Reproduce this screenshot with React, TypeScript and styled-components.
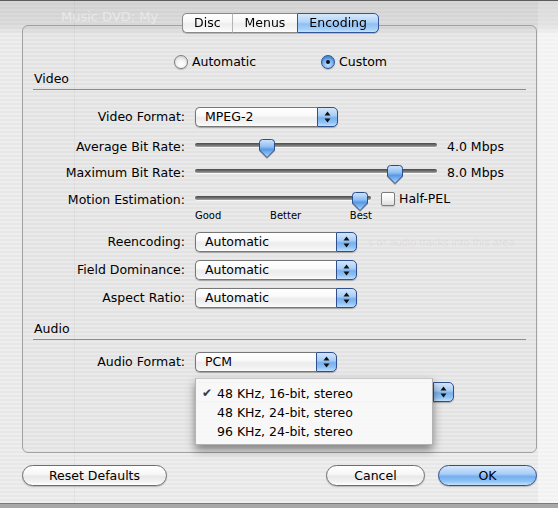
import React from "react";
import styled, { createGlobalStyle } from "styled-components";

const GlobalStyle = createGlobalStyle`
  html, body { margin: 0; padding: 0; }
  body {
    font-family: "DejaVu Sans", "Liberation Sans", sans-serif;
    font-size: 12.5px;
    color: #000;
  }
`;

const stripes =
  "repeating-linear-gradient(to bottom, #eeeeee 0px, #eeeeee 2px, #e7e7e7 2px, #e7e7e7 4px)";

const Sheet = styled.div`
  width: 558px;
  height: 508px;
  box-sizing: border-box;
  border-top: 1px solid #5c5c5c;
  display: flex;
  flex-direction: column;
  overflow: hidden;
  background:
    linear-gradient(to bottom, rgba(0, 0, 0, 0.1) 0px, rgba(0, 0, 0, 0.07) 24px, rgba(0, 0, 0, 0) 34px),
    linear-gradient(to right, rgba(0, 0, 0, 0) 538px, rgba(255, 255, 255, 0.45) 538px),
    linear-gradient(to right, rgba(0, 0, 0, 0) 74px, rgba(0, 0, 0, 0.04) 74px, rgba(0, 0, 0, 0.04) 75px, rgba(0, 0, 0, 0) 75px),
    ${stripes};
`;

const Main = styled.div`
  display: flex;
  flex-direction: column;
  padding: 0 21px 0 22px;
`;

const GhostTitle = styled.div`
  height: 16px;
  padding: 8px 0 0 61px;
  line-height: 16px;
  font-size: 13px;
  color: rgba(255, 255, 255, 0.45);
  white-space: nowrap;
`;

const GroupBox = styled.div`
  height: 428px;
  box-sizing: border-box;
  border: 1px solid #a2a2a2;
  border-radius: 6px;
  background: linear-gradient(to bottom, rgba(0, 0, 0, 0.035) 0px, rgba(0, 0, 0, 0.02) 10px, rgba(0, 0, 0, 0.02) 100%);
  padding: 0 10px;
  display: flex;
  flex-direction: column;
`;

const TabBar = styled.div`
  align-self: center;
  margin-top: -13px;
  margin-left: 2px;
  display: flex;
  height: 20px;
  filter: drop-shadow(0 1px 0.5px rgba(0, 0, 0, 0.2));
`;

const Tab = styled.div<{ $active?: boolean; $first?: boolean; $last?: boolean }>`
  box-sizing: border-box;
  height: 20px;
  padding: 0 11.5px;
  line-height: 18px;
  border-top: 1px solid ${(p) => (p.$active ? "#34559a" : "#8a8a8a")};
  border-bottom: 1px solid ${(p) => (p.$active ? "#34559a" : "#8a8a8a")};
  border-left: 1px solid ${(p) => (p.$active ? "#34559a" : p.$first ? "#8a8a8a" : "#b4b4b4")};
  border-right: ${(p) => (p.$last || p.$active ? `1px solid ${p.$active ? "#34559a" : "#8a8a8a"}` : "none")};
  border-radius: ${(p) => (p.$first ? "5px 0 0 5px" : p.$last ? "0 5px 5px 0" : "0")};
  background: ${(p) =>
    p.$active
      ? "linear-gradient(to bottom, #d6e9fc 0%, #b0d3f7 45%, #8fc0f3 55%, #a6d0f7 85%, #c6e3fd 100%)"
      : "linear-gradient(to bottom, #ffffff 0%, #f7f7f7 45%, #ededed 55%, #f6f6f6 85%, #ffffff 100%)"};
  white-space: nowrap;
`;

const RadioRow = styled.div`
  margin-top: 21px;
  height: 16px;
  display: flex;
  justify-content: center;
  gap: 65px;
  padding-left: 2px;
`;

const RadioItem = styled.div`
  display: flex;
  align-items: center;
  gap: 4px;
  line-height: 16px;
`;

const RadioDot = styled.span<{ $on?: boolean }>`
  width: 14px;
  height: 14px;
  box-sizing: border-box;
  border-radius: 50%;
  border: 1px solid ${(p) => (p.$on ? "#2f5193" : "#7f7f7f")};
  background: ${(p) =>
    p.$on
      ? "radial-gradient(circle at 50% 75%, #c4e2fd 0%, #7fb5f0 45%, #4d8fe0 70%, #3f7bcf 100%)"
      : "radial-gradient(circle at 50% 70%, #ffffff 0%, #f2f2f2 45%, #d6d6d6 80%, #c0c0c0 100%)"};
  box-shadow: 0 1px 1px rgba(0, 0, 0, 0.2);
  display: flex;
  align-items: center;
  justify-content: center;
  &::after {
    content: "";
    display: ${(p) => (p.$on ? "block" : "none")};
    width: 4px;
    height: 4px;
    border-radius: 50%;
    background: #111;
  }
`;

const SectionTitle = styled.div<{ $mt: number }>`
  margin-top: ${(p) => p.$mt}px;
  line-height: 16px;
  padding: 1px 0 2px 1px;
  border-bottom: 1px solid #8c8c8c;
`;

const FieldRow = styled.div<{ $mt: number; $top?: boolean }>`
  margin-top: ${(p) => p.$mt}px;
  display: flex;
  align-items: ${(p) => (p.$top ? "flex-start" : "center")};
  min-height: ${(p) => (p.$top ? 19 : 20)}px;
  white-space: nowrap;
`;

const FieldLabel = styled.div<{ $dy?: number }>`
  width: 152px;
  flex-shrink: 0;
  margin-right: 10px;
  margin-top: ${(p) => p.$dy ?? 0}px;
  text-align: right;
  line-height: 16px;
`;

const Indent = styled.div`
  width: 162px;
  flex-shrink: 0;
`;

const PopupBox = styled.div<{ $w: number }>`
  position: relative;
  width: ${(p) => p.$w}px;
  height: 20px;
  display: flex;
  flex-shrink: 0;
  border-radius: 5px;
  box-shadow: 0 1px 1px rgba(0, 0, 0, 0.28);
`;

const PopupBody = styled.div`
  flex: 1;
  box-sizing: border-box;
  height: 20px;
  border: 1px solid #777;
  border-right: none;
  border-radius: 5px 0 0 5px;
  padding-left: 9px;
  line-height: 18px;
  overflow: hidden;
  background: linear-gradient(to bottom, #ffffff 0%, #fafafa 40%, #ececec 55%, #f3f3f3 85%, #fdfdfd 100%);
`;

const PopupArrows = styled.div`
  width: 21px;
  box-sizing: border-box;
  height: 20px;
  border: 1px solid #2f4f8f;
  border-radius: 0 5px 5px 0;
  background: linear-gradient(to bottom, #d2e6fb 0%, #a9cdf5 42%, #78b0ee 55%, #8fc3f5 80%, #c1e0fd 100%);
  display: flex;
  align-items: center;
  justify-content: center;
`;

const SliderBox = styled.div<{ $w: number }>`
  position: relative;
  width: ${(p) => p.$w}px;
  height: 19px;
  flex-shrink: 0;
`;

const Track = styled.div`
  margin-top: 5px;
  height: 4px;
  border-radius: 2px;
  background: linear-gradient(to bottom, #4a4a4a 0%, #6e6e6e 50%, #a5a5a5 100%);
  box-shadow: 0 1px 0 rgba(255, 255, 255, 0.7);
`;

const Thumb = styled.div`
  position: absolute;
  top: 0;
  width: 18px;
  height: 21px;
  filter: drop-shadow(0 1px 0.6px rgba(0, 0, 0, 0.3));
`;

const Value = styled.div`
  margin-left: 10px;
  margin-top: 1px;
  line-height: 16px;
`;

const CheckBox = styled.span`
  margin: 1px 0 0 10px;
  width: 14px;
  height: 14px;
  box-sizing: border-box;
  border: 1px solid #7c7c7c;
  border-radius: 2px;
  background: linear-gradient(to bottom, #ffffff 0%, #f4f4f4 50%, #dedede 100%);
  box-shadow: 0 1px 1px rgba(0, 0, 0, 0.15);
  flex-shrink: 0;
`;

const CheckLabel = styled.div`
  margin-left: 4px;
  line-height: 16px;
`;

const TickRow = styled.div`
  margin-left: 162px;
  width: 177px;
  display: flex;
  justify-content: space-between;
  font-size: 10px;
  line-height: 12px;
`;

const Ghost = styled.div`
  margin-left: 11px;
  font-family: "Liberation Sans", sans-serif;
  font-size: 11px;
  color: rgba(0, 0, 0, 0.06);
`;

const Menu = styled.div`
  position: absolute;
  left: 0;
  top: -4px;
  width: 238px;
  box-sizing: border-box;
  padding: 5px 0 3px;
  background: rgba(248, 248, 248, 0.97);
  border: 1px solid #b3b3b3;
  border-top-color: #c8c8c8;
  box-shadow: 0 5px 9px rgba(0, 0, 0, 0.45);
  z-index: 5;
`;

const MenuItem = styled.div`
  position: relative;
  height: 19px;
  line-height: 19px;
  padding-left: 21px;
  white-space: nowrap;
`;

const Check = styled.span`
  position: absolute;
  left: 6px;
  top: 0;
  font-size: 12px;
  color: #3a3a3a;
`;

const ButtonRow = styled.div`
  margin-top: 12px;
  display: flex;
  justify-content: space-between;
`;

const ButtonGroup = styled.div`
  display: flex;
  gap: 13px;
`;

const Button = styled.div<{ $w: number; $primary?: boolean }>`
  width: ${(p) => p.$w}px;
  height: 21px;
  box-sizing: border-box;
  border-radius: 11px;
  border: 1px solid ${(p) => (p.$primary ? "#2f4f8f" : "#6e6e6e")};
  line-height: 19px;
  text-align: center;
  box-shadow: 0 1px 1px rgba(0, 0, 0, 0.22);
  background: ${(p) =>
    p.$primary
      ? "linear-gradient(to bottom, #d4e8fc 0%, #a8cdf6 42%, #76aeee 55%, #8cc2f5 80%, #c3e1fd 100%)"
      : "linear-gradient(to bottom, #ffffff 0%, #f7f7f7 42%, #e8e8e8 55%, #f2f2f2 82%, #ffffff 100%)"};
`;

const Footer = styled.div`
  margin-top: auto;
  height: 4px;
  border-top: 1px solid #7a7a7a;
  background: #a8a8a8;
`;

const Arrows = () => (
  <svg width="7" height="12" viewBox="0 0 7 12">
    <polygon points="3.5,0.5 6.5,4.5 0.5,4.5" fill="#111" />
    <polygon points="0.5,7.5 6.5,7.5 3.5,11.5" fill="#111" />
  </svg>
);

const ThumbIcon = () => (
  <svg width="18" height="21" viewBox="0 0 18 21">
    <defs>
      <linearGradient id="thumbGrad" x1="0" y1="0" x2="0" y2="1">
        <stop offset="0" stopColor="#cfe4fb" />
        <stop offset="0.4" stopColor="#8fbff3" />
        <stop offset="0.55" stopColor="#5a98e6" />
        <stop offset="0.8" stopColor="#86bcf3" />
        <stop offset="1" stopColor="#b9dcfc" />
      </linearGradient>
    </defs>
    <path
      d="M1.5 4.5 Q1.5 1.5 4.5 1.5 H13.5 Q16.5 1.5 16.5 4.5 V12 L9 19.5 L1.5 12 Z"
      fill="url(#thumbGrad)"
      stroke="#2b4c8c"
      strokeWidth="1"
    />
  </svg>
);

const Popup = ({ w, text, children }: { w: number; text?: string; children?: React.ReactNode }) => (
  <PopupBox $w={w}>
    <PopupBody>{text}</PopupBody>
    <PopupArrows>
      <Arrows />
    </PopupArrows>
    {children}
  </PopupBox>
);

const Slider = ({ w, value }: { w: number; value: number }) => (
  <SliderBox $w={w}>
    <Track />
    <Thumb style={{ left: `${value * (w - 18)}px` }}>
      <ThumbIcon />
    </Thumb>
  </SliderBox>
);

export default function App() {
  return (
    <Sheet>
      <GlobalStyle />
      <GhostTitle>Music DVD: My</GhostTitle>
      <Main>
        <GroupBox>
          <TabBar>
            <Tab $first>Disc</Tab>
            <Tab>Menus</Tab>
            <Tab $active $last>
              Encoding
            </Tab>
          </TabBar>

          <RadioRow>
            <RadioItem>
              <RadioDot />
              Automatic
            </RadioItem>
            <RadioItem>
              <RadioDot $on />
              Custom
            </RadioItem>
          </RadioRow>

          <SectionTitle $mt={0}>Video</SectionTitle>

          <FieldRow $mt={17}>
            <FieldLabel>Video Format:</FieldLabel>
            <Popup w={143} text="MPEG-2" />
          </FieldRow>

          <FieldRow $mt={11} $top>
            <FieldLabel $dy={1}>Average Bit Rate:</FieldLabel>
            <Slider w={242} value={0.28} />
            <Value>4.0 Mbps</Value>
          </FieldRow>

          <FieldRow $mt={7} $top>
            <FieldLabel $dy={1}>Maximum Bit Rate:</FieldLabel>
            <Slider w={242} value={0.853} />
            <Value>8.0 Mbps</Value>
          </FieldRow>

          <FieldRow $mt={8} $top>
            <FieldLabel $dy={1}>Motion Estimation:</FieldLabel>
            <Slider w={176} value={0.985} />
            <CheckBox />
            <CheckLabel>Half-PEL</CheckLabel>
          </FieldRow>

          <TickRow>
            <span>Good</span>
            <span>Better</span>
            <span>Best</span>
          </TickRow>

          <FieldRow $mt={10}>
            <FieldLabel>Reencoding:</FieldLabel>
            <Popup w={162} text="Automatic" />
            <Ghost>s or audio tracks into this area</Ghost>
          </FieldRow>

          <FieldRow $mt={8}>
            <FieldLabel>Field Dominance:</FieldLabel>
            <Popup w={162} text="Automatic" />
          </FieldRow>

          <FieldRow $mt={8}>
            <FieldLabel>Aspect Ratio:</FieldLabel>
            <Popup w={162} text="Automatic" />
          </FieldRow>

          <SectionTitle $mt={12}>Audio</SectionTitle>

          <FieldRow $mt={12}>
            <FieldLabel>Audio Format:</FieldLabel>
            <Popup w={142} text="PCM" />
          </FieldRow>

          <FieldRow $mt={10}>
            <Indent />
            <Popup w={259}>
              <Menu>
                <MenuItem>
                  <Check>✔</Check>48 KHz, 16-bit, stereo
                </MenuItem>
                <MenuItem>48 KHz, 24-bit, stereo</MenuItem>
                <MenuItem>96 KHz, 24-bit, stereo</MenuItem>
              </Menu>
            </Popup>
          </FieldRow>
        </GroupBox>

        <ButtonRow>
          <Button $w={145}>Reset Defaults</Button>
          <ButtonGroup>
            <Button $w={99}>Cancel</Button>
            <Button $w={99} $primary>
              OK
            </Button>
          </ButtonGroup>
        </ButtonRow>
      </Main>
      <Footer />
    </Sheet>
  );
}
